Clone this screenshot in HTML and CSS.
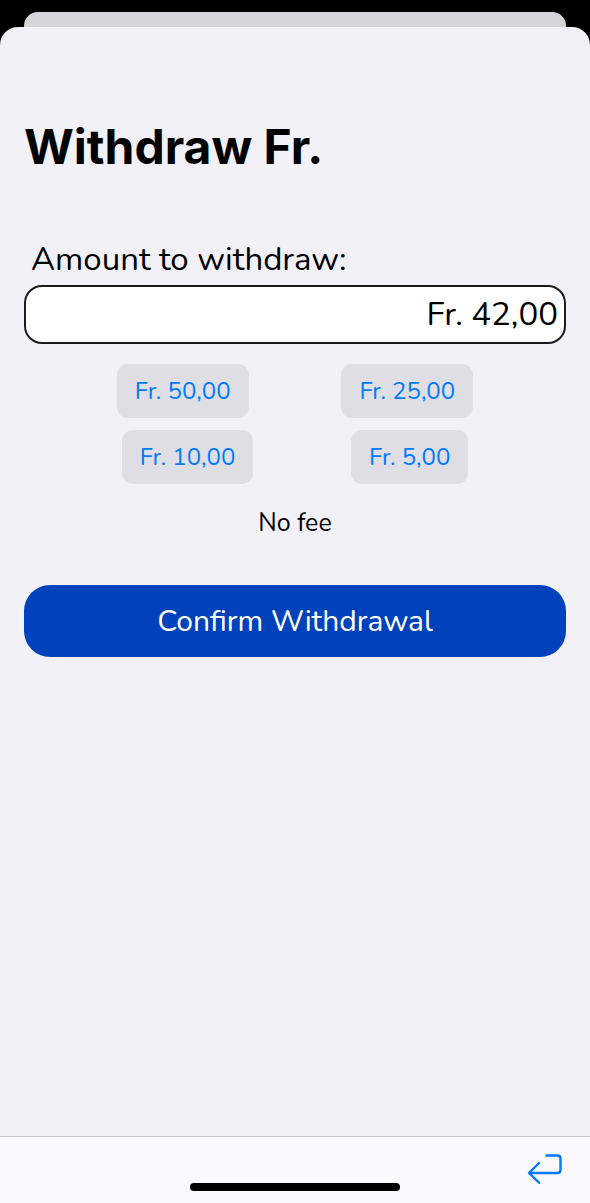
FILE: index.html
```html
<!DOCTYPE html>
<html lang="en">
<head>
<meta charset="utf-8">
<meta name="viewport" content="width=device-width, initial-scale=1">
<title>Withdraw Fr.</title>
<link rel="stylesheet" href="styles.css">
</head>
<body>
<div class="screen">
  <div class="previous-sheet"></div>
  <div class="sheet">
    <main class="content">
      <h1 class="title">Withdraw Fr.</h1>
      <form class="form">
        <label class="label" for="amount">Amount to withdraw:</label>
        <input class="amount" id="amount" type="text" inputmode="decimal" value="Fr. 42,00">
        <div class="presets">
          <div class="preset-row">
            <button class="preset" type="button">Fr. 50,00</button>
            <button class="preset" type="button">Fr. 25,00</button>
          </div>
          <div class="preset-row">
            <button class="preset" type="button">Fr. 10,00</button>
            <button class="preset" type="button">Fr. 5,00</button>
          </div>
        </div>
        <p class="fee">No fee</p>
        <button class="confirm" type="submit">Confirm Withdrawal</button>
      </form>
    </main>
    <footer class="toolbar">
      <button class="back" type="button" aria-label="Back">
        <svg width="36" height="32" viewBox="0 0 36 32" fill="none" stroke="currentColor" stroke-width="2.4" stroke-linecap="round" stroke-linejoin="round"><path d="M19.500 2.500H30.500Q33.500 2.500 33.500 5.500V17Q33.500 20 30.500 20H2M12 10L2 20L12 29.700"/></svg>
      </button>
      <div class="home-indicator"></div>
    </footer>
  </div>
</div>
</body>
</html>
```
FILE: styles.css
```css
* {
  box-sizing: border-box;
}

body {
  margin: 0;
  background: #000;
  color: #000;
  font-family: Nunito, "Open Sans", sans-serif;
}

button,
input {
  font: inherit;
}

.screen {
  display: flex;
  flex-direction: column;
  min-height: 100vh;
  padding-top: 12px;
}

.previous-sheet {
  height: 15px;
  margin: 0 24px;
  border-radius: 14px 14px 0 0;
  background: #d5d4d9;
}

.sheet {
  display: flex;
  flex: 1;
  flex-direction: column;
  overflow: hidden;
  border-radius: 18px 18px 0 0;
  background: #f2f1f7;
}

.content {
  flex: 1;
  padding: 90px 24px 24px;
}

.title {
  margin: 0;
  font: 700 48px/60px Inter, sans-serif;
}

.form {
  display: flex;
  flex-direction: column;
  margin-top: 60px;
}

.label {
  padding: 0 7px;
  font-size: 33px;
  line-height: 46px;
}

.amount {
  width: 100%;
  height: 59px;
  margin-top: 2px;
  padding: 0 6px;
  border: 2px solid #1c1c1e;
  border-radius: 18px;
  background: #fff;
  color: #000;
  font-size: 33px;
  text-align: right;
}

.presets {
  display: grid;
  gap: 12px;
  margin-top: 20px;
}

.preset-row {
  display: flex;
  justify-content: space-evenly;
}

.preset {
  height: 54px;
  padding: 0 18px;
  border: 0;
  border-radius: 11px;
  background: #dfdee4;
  color: #007aff;
  font-size: 24px;
}

.fee {
  margin: 22px 0 0;
  font-size: 25px;
  line-height: 34px;
  text-align: center;
}

.confirm {
  height: 72px;
  margin-top: 45px;
  border: 0;
  border-radius: 26px;
  background: #0042bb;
  color: #fff;
  font-size: 30px;
}

.toolbar {
  display: grid;
  grid-template-areas: "bar";
  height: 67px;
  padding: 16px 27px 12px;
  border-top: 1px solid #c8c8cb;
  background: #fafafd;
}

.back {
  grid-area: bar;
  align-self: start;
  justify-self: end;
  height: 32px;
  padding: 0;
  border: 0;
  background: none;
  color: #007aff;
}

.home-indicator {
  grid-area: bar;
  align-self: end;
  justify-self: center;
  width: 210px;
  height: 8px;
  border-radius: 4px;
  background: #000;
}
```
